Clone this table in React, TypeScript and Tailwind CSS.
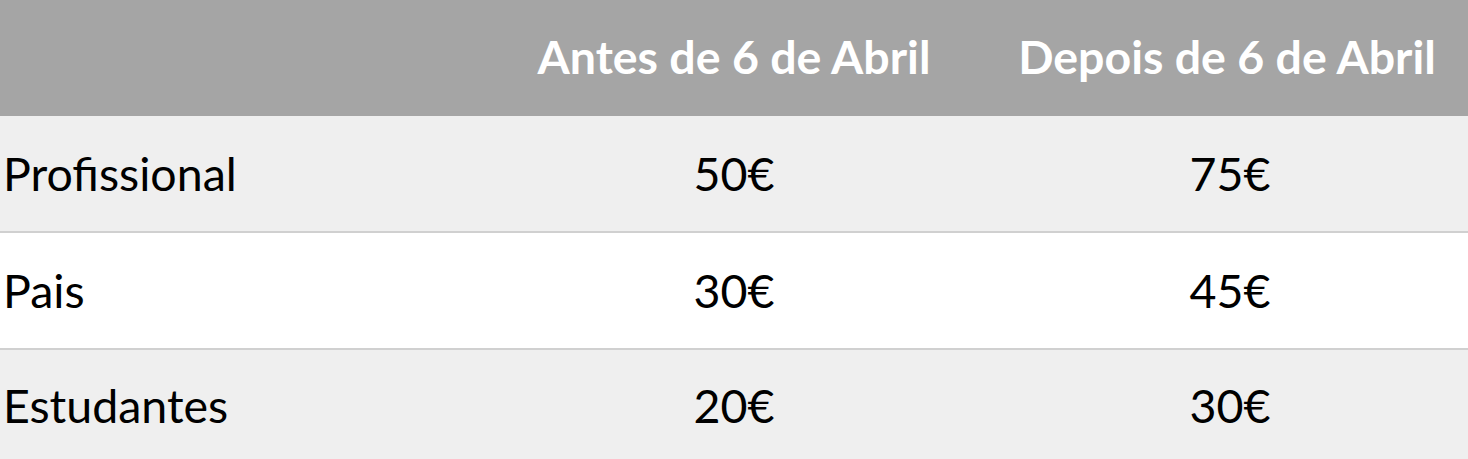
import React from 'react';

const rows = [
    { label: 'Profissional', before: '50€', after: '75€', bg: 'bg-[#efefef]' },
    { label: 'Pais', before: '30€', after: '45€', bg: 'bg-white' },
    { label: 'Estudantes', before: '20€', after: '30€', bg: 'bg-[#efefef]' },
];

const App: React.FC = () => {
    return (
        <div className="w-[1468px] h-[459px] overflow-hidden bg-white font-['Lato',sans-serif] text-black">
            <div className="grid grid-cols-[476px_516px_1fr] h-[116px] pb-[4px] bg-[#a5a5a5] items-center text-white font-bold text-[46.5px] leading-none">
                <div />
                <div className="text-center">Antes de 6 de Abril</div>
                <div className="text-center pr-[6px]">Depois de 6 de Abril</div>
            </div>
            {rows.map((r, i) => (
                <div
                    key={r.label}
                    className={`grid grid-cols-[476px_516px_1fr] items-center text-[46.5px] leading-none ${r.bg} ${i < rows.length - 1 ? 'h-[117px] border-b-2 border-[#d0d0d0]' : 'h-[110px]'}`}
                >
                    <div className="pl-[3px]">{r.label}</div>
                    <div className="text-center">{r.before}</div>
                    <div className="text-center">{r.after}</div>
                </div>
            ))}
        </div>
    );
};

export default App;
